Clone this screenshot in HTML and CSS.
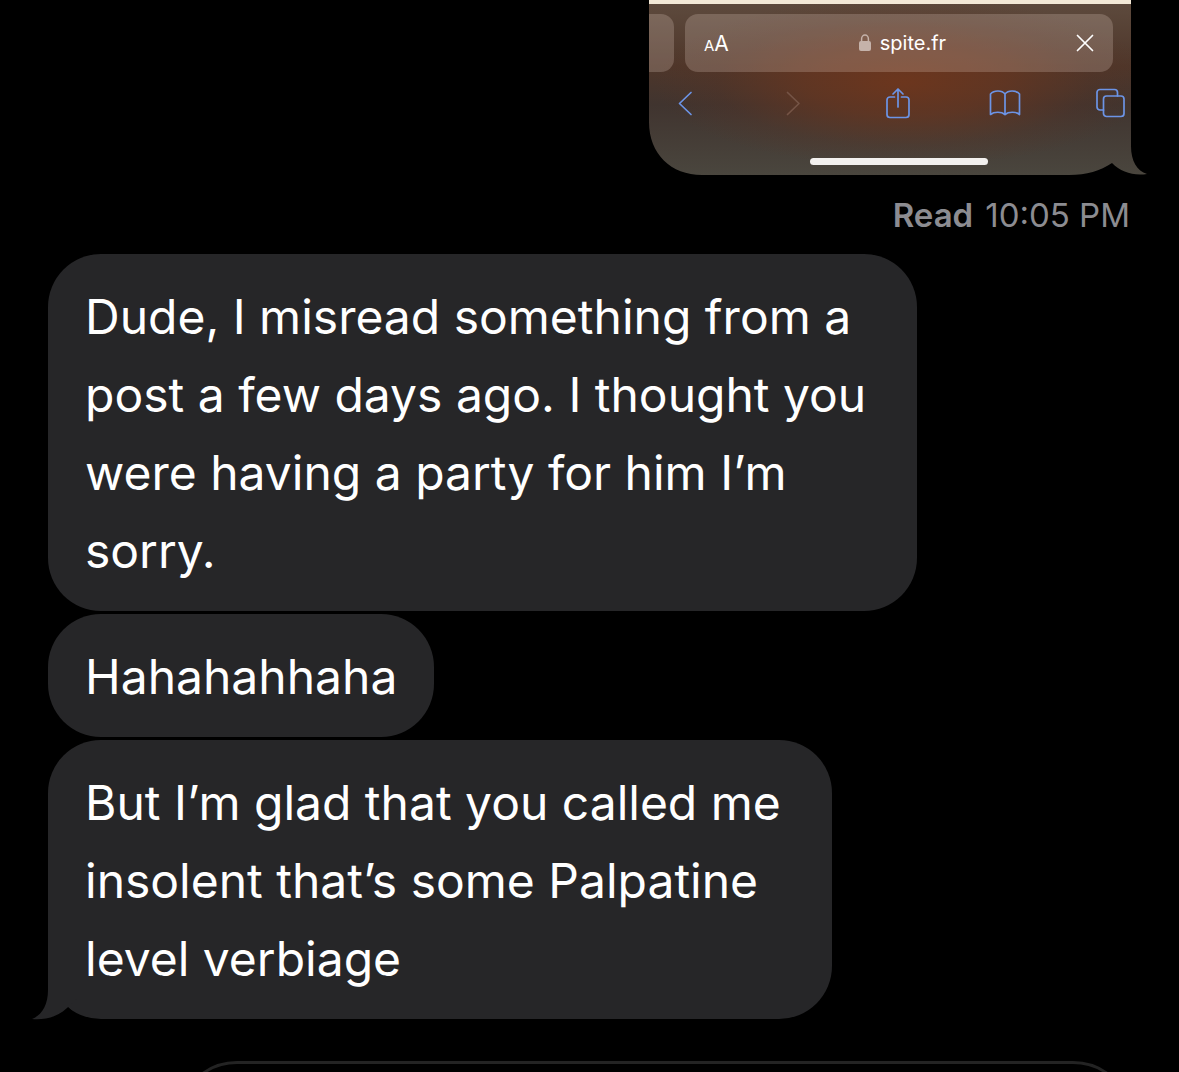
FILE: index.html
```html
<!DOCTYPE html>
<html lang="en">
<head>
<meta charset="utf-8">
<meta name="viewport" content="width=device-width, initial-scale=1">
<title>Messages</title>
<link rel="stylesheet" href="styles.css">
</head>
<body>
<main class="chat">
  <section class="sent">
    <div class="preview">
      <div class="page-edge"></div>
      <div class="address-row">
        <div class="previous-tab"></div>
        <div class="address-bar">
          <button class="text-size" aria-label="Text size"><span class="small-a">A</span>A</button>
          <div class="site">
            <svg class="lock" width="12" height="18" viewBox="0 0 12 18" aria-hidden="true"><rect y="7" width="12" height="10" rx="2" fill="currentColor"/><path d="M2.6 8V5a3.4 4 0 0 1 6.8 0v3" fill="none" stroke="currentColor" stroke-width="1.5"/></svg>
            <span>spite.fr</span>
          </div>
          <button class="icon-button stop" aria-label="Stop loading">
            <svg width="18" height="18" viewBox="0 0 18 18"><path d="M1.5 1.5l15 15M16.5 1.5l-15 15"/></svg>
          </button>
        </div>
      </div>
      <nav class="toolbar" aria-label="Browser">
        <button class="icon-button" aria-label="Back"><svg width="32" height="32" viewBox="0 0 32 32"><path d="M22 5.500L10.500 16.500 22 27.500"/></svg></button>
        <button class="icon-button forward" aria-label="Forward" disabled><svg width="32" height="32" viewBox="0 0 32 32"><path d="M11.500 5.500L23 16.500l-11.500 11"/></svg></button>
        <button class="icon-button" aria-label="Share"><svg width="32" height="32" viewBox="0 0 32 32"><path d="M12.500 10H8a3 3 0 0 0-3 3v14.500a3 3 0 0 0 3 3h16a3 3 0 0 0 3-3V13a3 3 0 0 0-3-3h-4.500M16 20V2M11 7l5-5 5 5"/></svg></button>
        <button class="icon-button" aria-label="Bookmarks"><svg width="32" height="32" viewBox="0 0 32 32"><path d="M16 7C13 3 5 3 1.500 7v20.500c3.500-3 11-3 14.500 0 3.500-3 11-3 14.500 0V7C27 3 19 3 16 7zV27.500"/></svg></button>
        <button class="icon-button" aria-label="Tabs"><svg width="32" height="32" viewBox="0 0 32 32"><path d="M8.500 23H5a3 3 0 0 1-3-3V5.500a3 3 0 0 1 3-3H19.500a3 3 0 0 1 3 3V9"/><rect x="8.500" y="9" width="20.500" height="20.500" rx="3"/></svg></button>
      </nav>
      <div class="home-bar"></div>
    </div>
    <p class="receipt"><strong>Read</strong> <time datetime="22:05">10:05 PM</time></p>
  </section>
  <section class="received">
    <p class="bubble long">Dude, I misread something from a<br>post a few days ago. I thought you<br>were having a party for him I’m<br>sorry.</p>
    <p class="bubble">Hahahahhaha</p>
    <p class="bubble long">But I’m glad that you called me<br>insolent that’s some Palpatine<br>level verbiage
      <svg class="tail" width="50" height="54" viewBox="0 0 50 54" aria-hidden="true"><path class="gap" d="M10 54L36 41Q46 51 50 54z"/><path class="fill" d="M16 0V24C16 39 10 49 0 53C13 54 26 51 35 42L48 30V0z"/></svg>
    </p>
  </section>
  <form class="compose">
    <input class="message-field" type="text" aria-label="Message">
  </form>
</main>
</body>
</html>
```
FILE: styles.css
```css
* {
  box-sizing: border-box;
}

body {
  margin: 0;
  background: #000;
  color: #fff;
  font-family: Inter, "Liberation Sans", sans-serif;
}

p {
  margin: 0;
}

button {
  padding: 0;
  border: 0;
  background: none;
  color: inherit;
  font: inherit;
}

.chat {
  display: flex;
  flex-direction: column;
  height: 100vh;
  overflow: hidden;
}

.sent,
.received,
.compose {
  flex: none;
}

.sent {
  display: flex;
  flex-direction: column;
  align-items: flex-end;
  padding-right: 32px;
}

/* The outline of the preview includes the tail at its lower right. */
.preview {
  width: 498px;
  height: 175px;
  padding-right: 16px;
  background:
    radial-gradient(ellipse 250px 85px at 255px 82px, rgb(112 54 28 / 90%) 0%, rgb(108 54 30 / 65%) 40%, rgb(96 50 32 / 22%) 75%, rgb(90 48 32 / 0%) 100%),
    linear-gradient(#5e4b3e 0%, #4e362a 38%, #40342f 60%, #4a463e 100%);
  clip-path: path("M0 0H482V146C482 161 488 171 498 174C484 176 472 172 463 163C451 171 438 175 420 175H53C22 175 0 154 0 122Z");
}

.page-edge {
  height: 4px;
  background: #f3e9d7;
}

.address-row {
  display: flex;
  gap: 11px;
  padding: 10px 18px 0 0;
}

.previous-tab {
  width: 25px;
  border-radius: 0 13px 13px 0;
  background: rgb(255 235 225 / 20%);
}

.address-bar {
  flex: 1;
  display: flex;
  align-items: center;
  justify-content: space-between;
  height: 58px;
  padding: 0 19px;
  border-radius: 13px;
  background: rgb(255 235 225 / 20%);
}

.text-size {
  font-size: 21px;
}

.small-a {
  font-size: 15px;
}

.site {
  display: flex;
  align-items: center;
  gap: 9px;
  font-size: 20px;
}

.lock {
  color: #c5b2aa;
}

.icon-button {
  display: flex;
}

.icon-button svg {
  fill: none;
  stroke: currentColor;
  stroke-width: 1.7;
  stroke-linecap: round;
  stroke-linejoin: round;
}

.toolbar {
  display: flex;
  justify-content: space-between;
  padding: 15px 4px 0 20px;
  color: #6c94e6;
}

.forward {
  color: #755446;
}

.home-bar {
  width: 178px;
  height: 7px;
  margin: 39px 0 0 161px;
  border-radius: 4px;
  background: #f3f1ef;
}

.receipt {
  display: flex;
  gap: 12px;
  padding: 19px 17px 0 0;
  color: #8c8c91;
  font-size: 33px;
  line-height: 42px;
}

.receipt strong {
  font-weight: 600;
}

.received {
  display: flex;
  flex-direction: column;
  align-items: flex-start;
  gap: 3px;
  padding: 18px 48px 0;
}

.bubble {
  position: relative;
  padding: 24px 37px 21px;
  border-radius: 53px;
  background: #262628;
  font-size: 48px;
  line-height: 78px;
}

.bubble.long {
  padding-right: 51px;
}

.tail {
  position: absolute;
  bottom: -1px;
  left: -16px;
}

.tail .fill {
  fill: #262628;
}

.tail .gap {
  fill: #000;
}

.compose {
  padding: 42px 46px 0 177px;
}

.message-field {
  display: block;
  width: 100%;
  height: 120px;
  padding: 0 36px;
  border: 3px solid #232323;
  border-radius: 60px;
  background: #000;
  color: #fff;
  font: inherit;
  font-size: 48px;
}
```
